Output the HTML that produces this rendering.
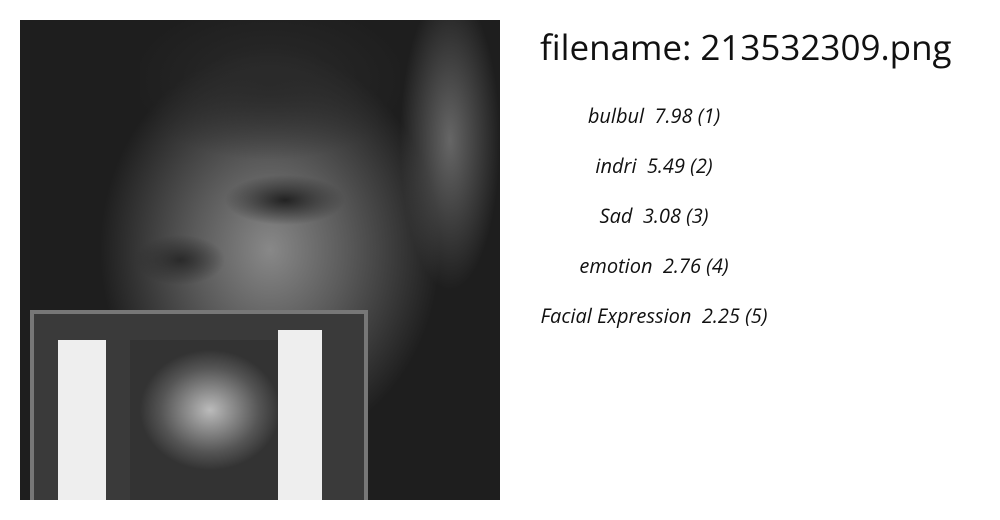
<!DOCTYPE html>
<html><head><style>
body{margin:0;width:1000px;height:520px;background:#fff;position:relative;overflow:hidden;font-family:"Open Sans","DejaVu Sans","Liberation Sans",sans-serif}
#img{position:absolute;left:20px;top:20px;width:480px;height:480px;background:#1e1e1e;overflow:hidden}
#img div{position:absolute}
h1{position:absolute;left:540px;top:24px;margin:0;font-weight:normal;font-size:35px;color:#111;white-space:nowrap}
.r{position:absolute;left:540px;width:228px;text-align:center;font-style:italic;font-size:20px;color:#111;white-space:nowrap}
</style></head><body>
<div id="img">
<div style="left:0;top:0;width:480px;height:480px;background:radial-gradient(ellipse 170px 200px at 250px 230px,#888 0%,#5a5a5a 45%,rgba(40,40,40,0) 100%)"></div>
<div style="left:120px;top:0;width:260px;height:140px;background:radial-gradient(ellipse 140px 80px at 130px 60px,#2a2a2a,rgba(0,0,0,0))"></div>
<div style="left:200px;top:150px;width:130px;height:60px;background:radial-gradient(ellipse 60px 25px at 65px 30px,#222,rgba(0,0,0,0))"></div>
<div style="left:110px;top:210px;width:100px;height:60px;background:radial-gradient(ellipse 45px 25px at 50px 30px,#2a2a2a,rgba(0,0,0,0))"></div>
<div style="left:380px;top:0;width:100px;height:300px;background:radial-gradient(ellipse 50px 150px at 50px 120px,#666,rgba(0,0,0,0))"></div>
<div style="left:10px;top:290px;width:330px;height:190px;background:#3a3a3a;border:4px solid #777"></div>
<div style="left:110px;top:320px;width:160px;height:160px;background:radial-gradient(ellipse 70px 60px at 80px 70px,#bbb,#555 70%,#333)"></div>
<div style="left:38px;top:320px;width:48px;height:160px;background:#eee"></div>
<div style="left:258px;top:310px;width:44px;height:170px;background:#eee"></div>
</div>
<h1>filename: 213532309.png</h1>
<div class="r" style="top:102px">bulbul&nbsp; 7.98 (1)</div>
<div class="r" style="top:152px">indri&nbsp; 5.49 (2)</div>
<div class="r" style="top:202px">Sad&nbsp; 3.08 (3)</div>
<div class="r" style="top:252px">emotion&nbsp; 2.76 (4)</div>
<div class="r" style="top:302px">Facial Expression&nbsp; 2.25 (5)</div>
</body></html>
